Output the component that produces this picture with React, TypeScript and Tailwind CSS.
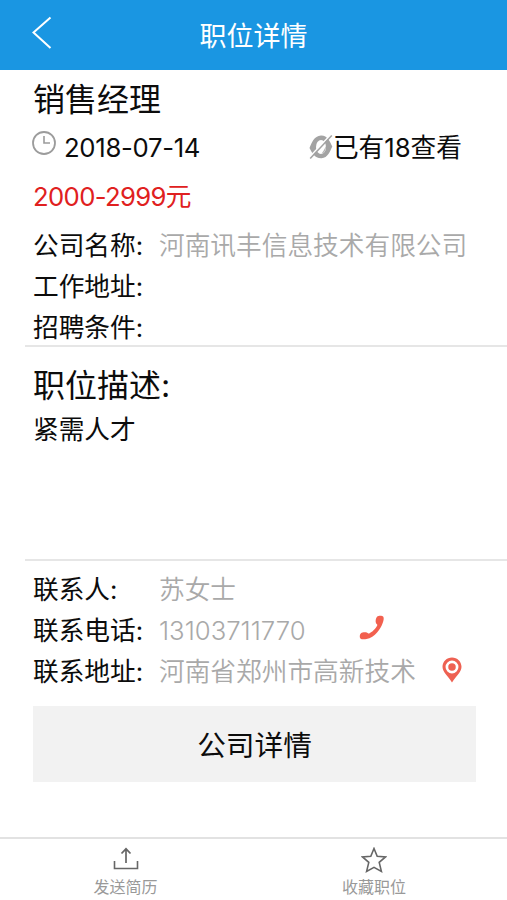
import type { ReactNode } from "react";

const COMPANY_FIELDS = [
  { label: "公司名称:", value: "河南讯丰信息技术有限公司" },
  { label: "工作地址:", value: "" },
  { label: "招聘条件:", value: "" },
];

const BackIcon = () => (
  <svg viewBox="0 0 20 34" className="h-[34px] w-5" fill="none">
    <path d="M18.500 1.500 1.500 16.500l17 15.500" stroke="#fff" strokeWidth="2" />
  </svg>
);

const ClockIcon = () => (
  <svg viewBox="0 0 24 24" className="size-6" fill="none" stroke="#9c9c9c">
    <circle cx="12" cy="12" r="11" strokeWidth="1.8" />
    <path d="M12 5v7h6" strokeWidth="1.6" />
  </svg>
);

const ViewsIcon = () => (
  <svg viewBox="0 0 24 24" className="size-6">
    <path
      d="M.5 13C2.500 8.500 5 .8 12 .6c6.500-.2 9 6.400 11.300 10.900-2.300 4.500-4.300 11.500-10.800 11.700C5.500 23.400 3 17.500.5 13Z"
      fill="#a3a3a3"
    />
    <ellipse cx="12" cy="12" rx="5" ry="7" fill="#fff" />
    <path d="M12.500 18.800c3.400-1 4.700-4.300 4.200-7.800-1 3-2.600 5.500-4.200 7.800Z" fill="#b5b5b5" />
    <path d="M21.500 0 .2 22.500" stroke="#fff" strokeWidth="1.600" />
    <path d="M22.800.5 1.200 23.500" stroke="#a3a3a3" strokeWidth="1.500" />
  </svg>
);

const PhoneIcon = () => (
  <svg viewBox="0 0 26 25" className="h-[25px] w-[26px]">
    <path
      d="M18.200 1.600c1.300-1.200 4.900-1.300 6.100.1.900 1.300.2 4.300-.7 6.600-1 2.700-2.800 6.200-5.300 9-3 3.500-6.700 6-10.800 6.800-2.400.4-5 .3-6.100-.7-1.100-1.200-.7-4.200.6-5.200 1.400-1 4.700-1.100 6.200-.4 1 .5.900 1.100 2 .6 2.900-1.300 6.700-4.900 8.100-8.200.4-1-.9-1.200-1.300-2-.8-1.700-.3-5.200 1.200-6.600Z"
      fill="#f2604f"
    />
  </svg>
);

const PinIcon = () => (
  <svg viewBox="0 0 20 26" className="h-[26px] w-5">
    <path
      d="M10 .5C4.700.5.500 4.600.500 9.800c0 5.200 4.500 8.200 9.500 15.700 5-7.500 9.500-10.500 9.500-15.700C19.500 4.600 15.300.5 10 .5Z"
      fill="#ee6152"
    />
    <circle cx="10" cy="10" r="5.100" fill="none" stroke="#fff" strokeWidth="2.700" />
  </svg>
);

const SendIcon = () => (
  <svg viewBox="0 0 26 24" className="h-6 w-[26px]" fill="none" stroke="#666">
    <path d="M1.500 14v7.500h23V14" strokeWidth="1.600" />
    <path d="M13 16V2M8.500 6.500 13 1.800l4.500 4.700" strokeWidth="1.700" />
  </svg>
);

const StarIcon = () => (
  <svg viewBox="0 0 26 26" className="size-[26px]" fill="none">
    <path
      d="m13 1.500 3.200 7.700 8.300.7-6.300 5.500 2.200 9L13 20.400l-7.400 4 2.200-9L1.500 9.900l8.300-.7Z"
      stroke="#666"
      strokeWidth="1.600"
    />
  </svg>
);

type FieldProps = {
  label: string;
  value?: string;
  children?: ReactNode;
};

const Field = ({ label, value, children }: FieldProps) => (
  <div className="flex h-9 items-center">
    <dt className="w-[126px] shrink-0 pt-0.5">{label}</dt>
    <dd className="pt-0.5 font-[350] text-[#a9a9a9]">{value}</dd>
    {children}
  </div>
);

type TabProps = {
  icon: ReactNode;
  label: string;
};

const Tab = ({ icon, label }: TabProps) => (
  <button
    type="button"
    className="flex flex-col items-center text-[16px] leading-5 text-[#999]"
  >
    <span className="flex h-[30px] items-start">{icon}</span>
    {label}
  </button>
);

export default function App() {
  return (
    <div className="flex h-[900px] w-[507px] flex-col overflow-hidden bg-white font-['Inter','Noto_Sans_CJK_SC',sans-serif] text-[25.700px] leading-9 whitespace-nowrap text-[#0c0c0c]">
      <header className="grid h-[70px] shrink-0 grid-cols-[1fr_auto_1fr] items-center bg-[#1a96e2] px-8 text-white">
        <button type="button" aria-label="返回" className="-mt-1">
          <BackIcon />
        </button>
        <h1 className="pt-1 text-[27px]">职位详情</h1>
      </header>

      <main className="flex-1">
        <section className="ml-[25px] border-b-2 border-[#e6e6e6] pl-2">
          <h2 className="h-[53px] pt-1.5 text-[32px] leading-[48px]">销售经理</h2>
          <div className="flex h-[49px] items-center">
            <span className="-mt-2.5 -ml-px">
              <ClockIcon />
            </span>
            <time className="ml-2 tracking-[-0.3px]">2018-07-14</time>
            <span className="ml-auto flex items-center pr-[45px]">
              <span className="-mt-0.5">
                <ViewsIcon />
              </span>
              <span className="pt-px">已有18查看</span>
            </span>
          </div>
          <p className="h-[55px] leading-[49px] tracking-[-0.65px] text-[#e02020]">
            2000-2999元
          </p>
          <dl className="flex flex-col gap-[5px]">
            {COMPANY_FIELDS.map((item) => (
              <Field key={item.label} label={item.label} value={item.value} />
            ))}
          </dl>
        </section>

        <section className="ml-[25px] h-[214px] border-b-2 border-[#e6e6e6] pt-[15px] pl-2">
          <h2 className="text-[32px] leading-[48px]">职位描述:</h2>
          <p className="mt-0.5">紧需人才</p>
        </section>

        <section className="pt-[10px] pr-[31px] pl-[33px]">
          <dl className="flex flex-col gap-[5px]">
            <Field label="联系人:" value="苏女士" />
            <Field label="联系电话:" value="13103711770">
              <button type="button" aria-label="拨打电话" className="-mt-1.5 mr-[91px] ml-auto">
                <PhoneIcon />
              </button>
            </Field>
            <Field label="联系地址:" value="河南省郑州市高新技术">
              <button type="button" aria-label="查看地图" className="-mt-0.5 mr-3.5 ml-auto">
                <PinIcon />
              </button>
            </Field>
          </dl>
          <button
            type="button"
            className="mt-[17px] h-[76px] w-full bg-[#f2f2f2] pt-1 text-[28.700px]"
          >
            公司详情
          </button>
        </section>
      </main>

      <footer className="grid h-[63px] shrink-0 grid-cols-[251px_246px] border-t-2 border-[#e2e2e2] pt-2">
        <Tab icon={<SendIcon />} label="发送简历" />
        <Tab icon={<StarIcon />} label="收藏职位" />
      </footer>
    </div>
  );
}
